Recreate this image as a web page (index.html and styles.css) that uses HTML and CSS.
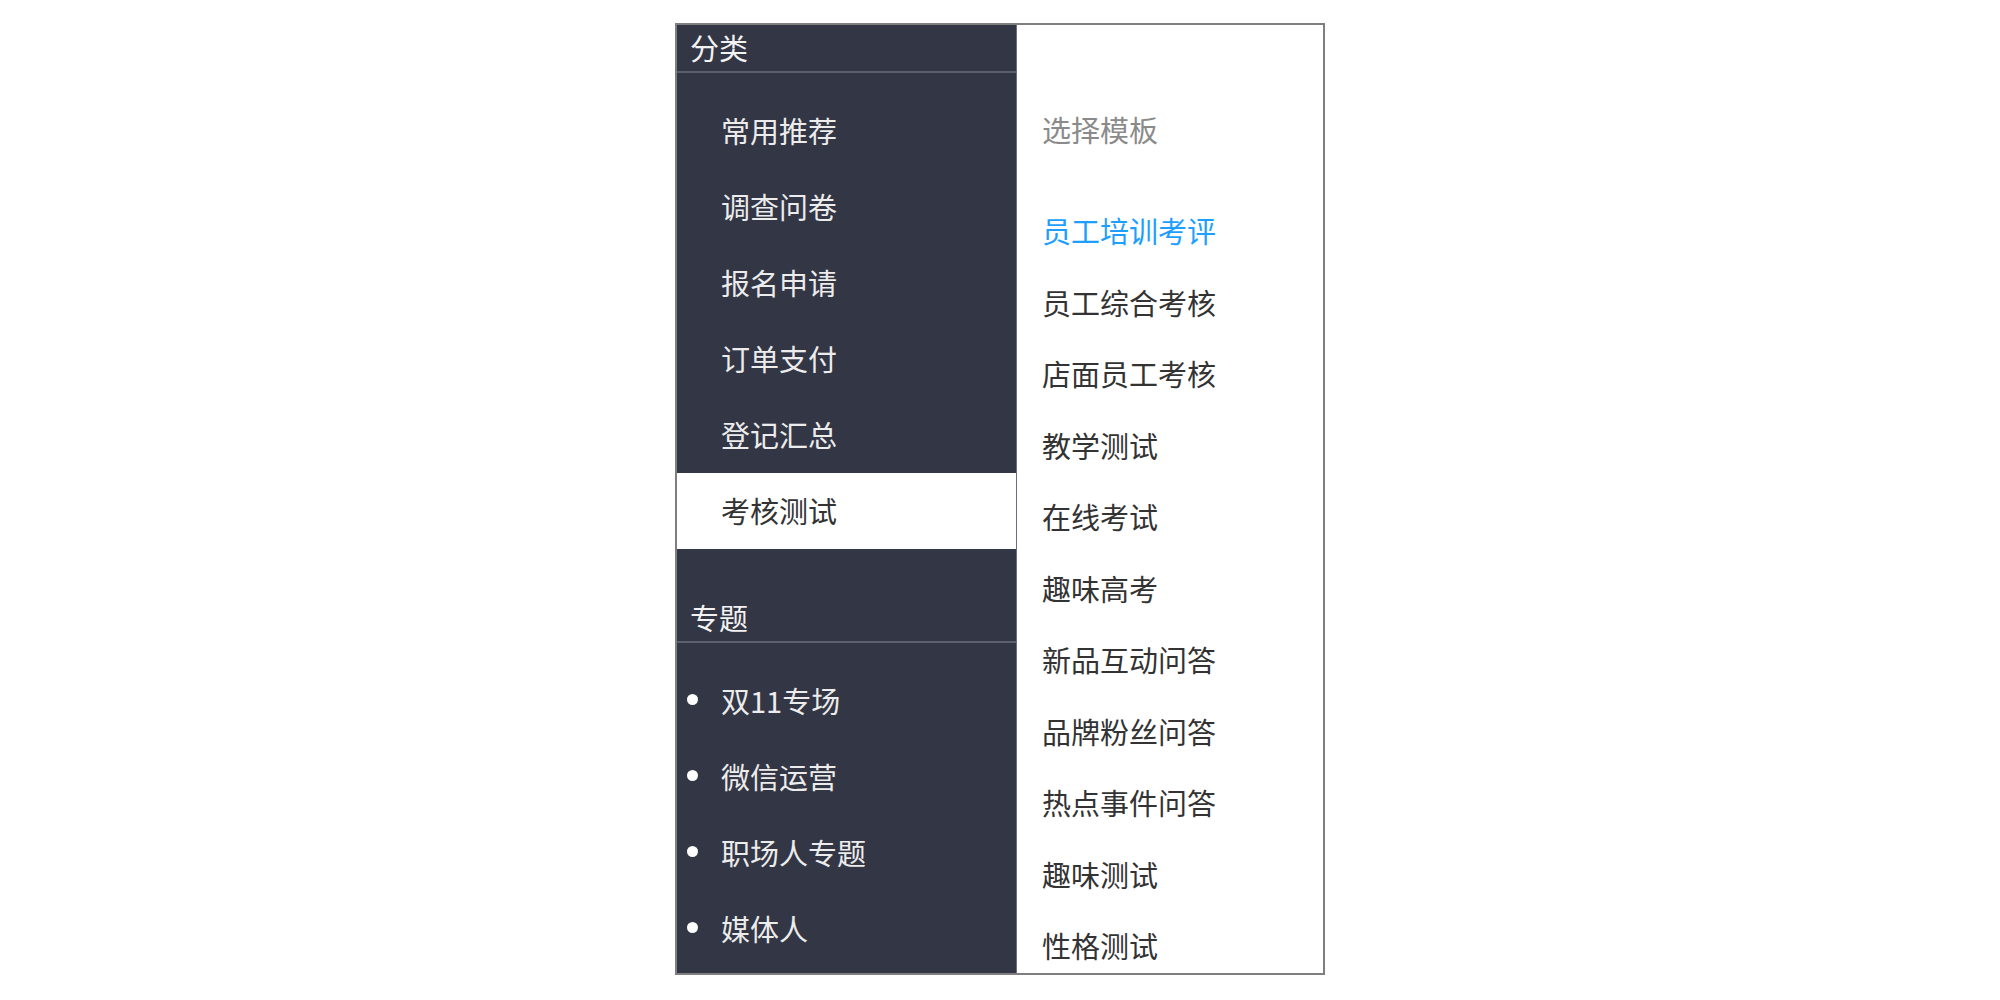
FILE: index.html
```html
<!DOCTYPE html>
<html lang="zh-CN">
<head>
<meta charset="utf-8">
<title>选择模板</title>
<link rel="stylesheet" href="styles.css">
</head>
<body>
<div class="panel">
  <aside class="side">
    <div class="side-head">分类</div>
    <ul class="side-list">
      <li class="side-item">常用推荐</li>
      <li class="side-item">调查问卷</li>
      <li class="side-item">报名申请</li>
      <li class="side-item">订单支付</li>
      <li class="side-item">登记汇总</li>
      <li class="side-item is-active">考核测试</li>
    </ul>
    <div class="side-head side-head-gap">专题</div>
    <ul class="side-list">
      <li class="side-item dot">双11专场</li>
      <li class="side-item dot">微信运营</li>
      <li class="side-item dot">职场人专题</li>
      <li class="side-item dot">媒体人</li>
    </ul>
  </aside>
  <main class="main">
    <div class="main-title">选择模板</div>
    <ul class="tpl-list">
      <li class="tpl is-current">员工培训考评</li>
      <li class="tpl">员工综合考核</li>
      <li class="tpl">店面员工考核</li>
      <li class="tpl">教学测试</li>
      <li class="tpl">在线考试</li>
      <li class="tpl">趣味高考</li>
      <li class="tpl">新品互动问答</li>
      <li class="tpl">品牌粉丝问答</li>
      <li class="tpl">热点事件问答</li>
      <li class="tpl">趣味测试</li>
      <li class="tpl">性格测试</li>
    </ul>
  </main>
</div>
</body>
</html>
```
FILE: styles.css
```css
* { box-sizing: border-box; }
html, body { margin: 0; padding: 0; background: #ffffff; }
body {
  font-family: "Noto Sans CJK SC", "Noto Sans", sans-serif;
  font-size: 29px;
}
ul { list-style: none; margin: 0; padding: 0; }

.panel {
  margin: 23px 0 0 675px;
  width: 650px;
  height: 952px;
  border: 2px solid #7f7f7f;
  display: flex;
  overflow: hidden;
}

.side {
  width: 339px;
  flex: none;
  background: #333645;
  color: #ececec;
}
.side-head {
  height: 48px;
  line-height: 44px;
  padding-left: 13px;
  border-bottom: 2px solid #5d606c;
  color: #f2f2f2;
}
.side-head-gap { margin-top: 46px; }
.side-list { padding-top: 20px; }
.side-item {
  height: 76px;
  line-height: 74px;
  padding-left: 44px;
  position: relative;
}
.side-item.is-active {
  background: #ffffff;
  color: #333333;
}
.side-item.dot::before {
  content: "";
  position: absolute;
  left: 10px;
  top: 31px;
  width: 11px;
  height: 11px;
  border-radius: 50%;
  background: #ffffff;
}

.main {
  flex: 1;
  background: #ffffff;
  border-left: 1px solid #6d707a;
  padding: 68px 0 0 25px;
}
.main-title {
  height: 72px;
  line-height: 72px;
  color: #8a8a8a;
  margin-bottom: 30px;
}
.tpl {
  height: 71.5px;
  line-height: 70px;
  color: #333333;
}
.tpl.is-current { color: #1e9fff; }
```
